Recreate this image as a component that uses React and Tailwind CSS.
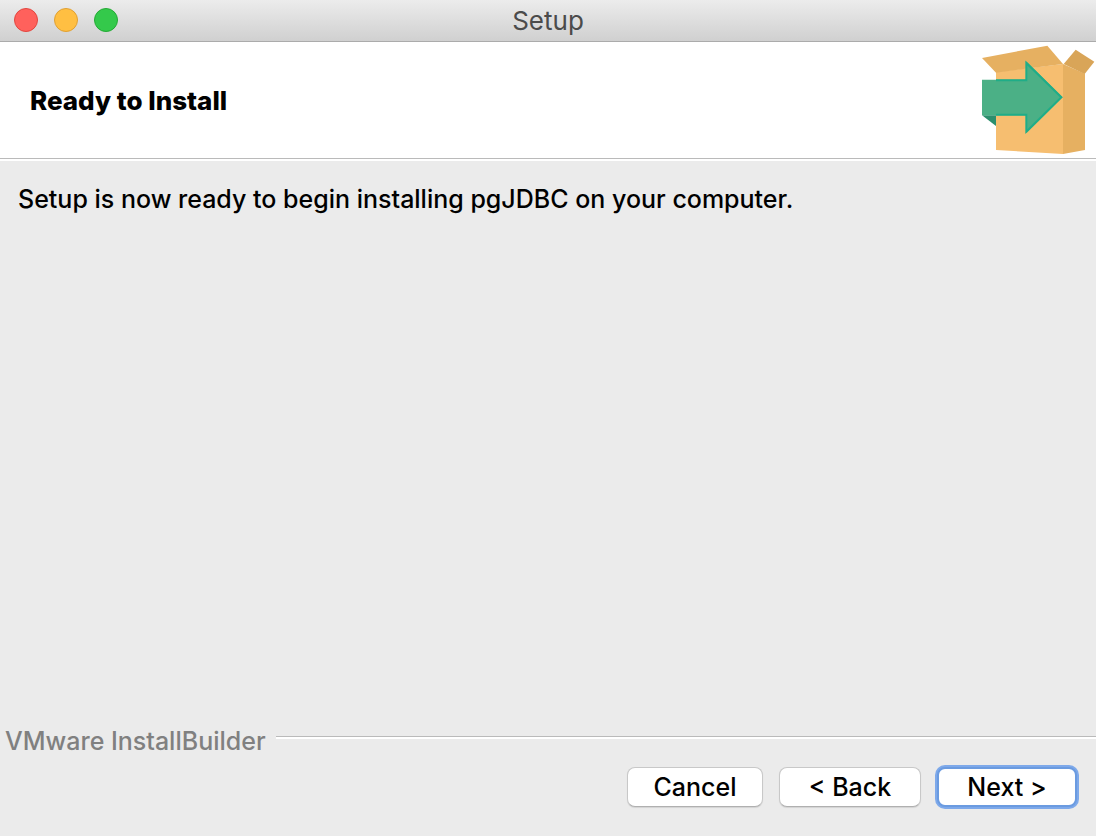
const lights = [
  'bg-[#ff615c] border-[#e2463f]',
  'bg-[#ffbf42] border-[#e0a033]',
  'bg-[#34c94b] border-[#24aa35]',
];

function BoxLogo() {
  return (
    <svg viewBox="60 42 348 336" className="h-28 w-29 shrink-0" aria-hidden="true">
      <path d="M108 126 L309 102 V372 L108 360 Z" fill="#f6be70" />
      <path d="M309 102 L375 131 V360 L309 372 Z" fill="#e6b061" />
      <path d="M66 84 L262 47 L309 102 L108 128 Z" fill="#e6b061" />
      <path d="M311 102 L347 59 L403 95 L374 132 Z" fill="#d9a558" />
      <path d="M66 256 H108 V288 Z" fill="#2c8f6d" />
      <path d="M66 149 H199 V94 L308 202 L199 310 V256 H66 Z" fill="#4bb086" />
      <path d="M108 151 H199 V99 L304 202 L199 305 V254 H108" fill="none" stroke="#1fad88" strokeWidth="6" />
    </svg>
  );
}

function DialogButton({ children, className }) {
  return (
    <button
      type="button"
      className={`flex h-10 items-center justify-center rounded-lg bg-white text-[25px] leading-8 font-medium text-black ${className}`}
    >
      {children}
    </button>
  );
}

const plain = 'border border-[#c8c8c8] border-b-[#b0b0b0] shadow-[0_1px_1px_rgba(0,0,0,0.1)]';

export default function App() {
  return (
    <div className="flex min-h-screen flex-col bg-[#ebebeb] font-['Inter','Liberation_Sans',sans-serif] text-black">
      <div className="grid h-[42px] grid-cols-[1fr_auto_1fr] items-center border-b border-[#ababab] bg-linear-to-b from-[#ececec] to-[#d0d0d0] px-3.5">
        <div className="flex gap-4 pb-0.5">
          {lights.map((c) => (
            <span key={c} className={`size-6 rounded-full border ${c}`} />
          ))}
        </div>
        <span className="text-[26px] leading-8 text-[#4b4b4b]">Setup</span>
      </div>

      <header className="flex h-[119px] items-center justify-between border-b-2 border-white bg-white">
        <div className="flex h-full flex-1 items-center justify-between border-b border-[#bababa] pl-[30px]">
          <h1 className="pt-0.5 text-[26px] leading-8 font-extrabold">Ready to Install</h1>
          <BoxLogo />
        </div>
      </header>

      <main className="flex-1 px-[18px] pt-[22px]">
        <p className="text-[25px] leading-8 font-medium">
          Setup is now ready to begin installing pgJDBC on your computer.
        </p>
      </main>

      <footer>
        <div className="flex items-start gap-2.5 pl-[5px]">
          <span className="text-[25px] leading-8 font-medium text-[#808080]">VMware InstallBuilder</span>
          <div className="mt-[11px] h-[3px] flex-1 border-t border-[#bababa] bg-white" />
        </div>
        <div className="flex items-center justify-end gap-4 pt-2.5 pr-[19px] pb-[29px]">
          <DialogButton className={`w-34 ${plain}`}>Cancel</DialogButton>
          <DialogButton className={`w-[142px] ${plain}`}>&lt; Back</DialogButton>
          <DialogButton className="w-[140px] border-2 border-[#6b9be0] ring-2 ring-[#7ea9ea]">
            Next &gt;
          </DialogButton>
        </div>
      </footer>
    </div>
  );
}
